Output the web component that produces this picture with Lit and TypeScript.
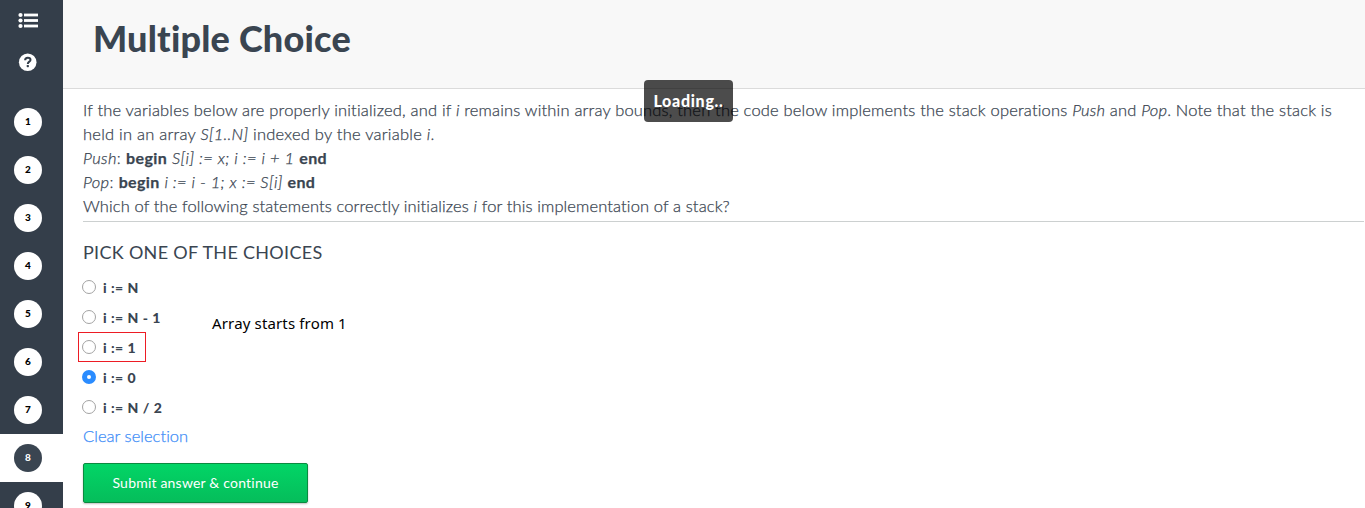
import { LitElement, html, css } from "lit";
import { customElement, state } from "lit/decorators.js";
import { classMap } from "lit/directives/class-map.js";

@customElement("question-sidebar")
class QuestionSidebar extends LitElement {
  static styles = css`
    :host { display: flex; flex-direction: column; width: 63px; flex: none; height: 508px; overflow: hidden; background: #343e4a; }
    .tools { height: 98px; flex: none; display: flex; flex-direction: column; padding: 12px 0 0 18px; box-sizing: border-box; gap: 24px; }
    svg { display: block; }
    .row { height: 48px; flex: none; display: flex; align-items: center; padding-left: 14px; }
    .row.active { background: #fff; }
    .dot { width: 28px; height: 28px; border-radius: 50%; background: #fff; color: #000; font: 900 10px/27px Lato, sans-serif; text-align: center; }
    .active .dot { background: #3a4551; color: #fff; }
  `;
  render() {
    return html`
      <div class="tools">
        <svg width="20" height="17" viewBox="0 0 20 17" fill="#fff">
          <circle cx="2.5" cy="3" r="2.1"/><circle cx="2.5" cy="8.5" r="2.1"/><circle cx="2.5" cy="14" r="2.1"/>
          <rect x="6" y="1.6" width="14" height="2.8"/><rect x="6" y="7.1" width="14" height="2.8"/><rect x="6" y="12.6" width="14" height="2.8"/>
        </svg>
        <svg width="20" height="18" viewBox="0 0 20 18">
          <circle cx="9.7" cy="9.2" r="8.8" fill="#fff"/>
          <path d="M7.1 7.2C7.1 5.5 8.3 4.7 9.8 4.7S12.5 5.5 12.5 6.9C12.5 8.7 9.8 8.6 9.8 10.9" fill="none" stroke="#343e4a" stroke-width="2"/>
          <rect x="8.7" y="12" width="2.2" height="2.2" rx=".6" fill="#343e4a"/>
        </svg>
      </div>
      ${[1, 2, 3, 4, 5, 6, 7, 8, 9].map((n) => html`
        <div class=${classMap({ row: true, active: n === 8 })}><div class="dot">${n}</div></div>`)}
    `;
  }
}

@customElement("app-root")
class AppRoot extends LitElement {
  static styles = css`
    :host { display: flex; position: relative; width: 1365px; height: 508px; overflow: hidden; background: #fff; color: #3a4551; font-family: Lato, sans-serif; font-variant-ligatures: none; }
    main { flex: 1; min-width: 0; }
    header { height: 73px; background: #f8f8f8; border-bottom: 1px solid #dbdbdb; padding: 15px 0 0 30px; }
    h1 { margin: 0; font: 900 36px/46px Lato, sans-serif; letter-spacing: 0.22px; font-variant-ligatures: none; }
    .content { padding: 9px 1px 0 20px; }
    .text { font-size: 16.5px; font-weight: 300; line-height: 24px; border-bottom: 1px solid #ccd0d0; padding-bottom: 3px; white-space: nowrap; -webkit-text-stroke: 0.25px currentColor; }
    .l1 { letter-spacing: 0.183px; }
    .l2 { letter-spacing: 0.24px; }
    .l3 { letter-spacing: 0.38px; }
    .l4 { letter-spacing: 0.36px; }
    .l5 { letter-spacing: 0.12px; }
    b { font-weight: 700; font-size: 16px; }
    h2 { margin: 18px 0 0; font: 400 18px/24px Lato, sans-serif; letter-spacing: 0.3px; }
    .choices { margin-top: 9px; }
    .choice { display: flex; align-items: center; height: 30px; font: 900 14px/30px Lato, sans-serif; letter-spacing: 0.5px; cursor: pointer; }
    .radio { box-sizing: border-box; width: 14px; height: 14px; margin: -2px 7px 0 -1px; border: 1px solid #a3a3a3; border-radius: 50%; background: #fff; }
    .on .radio { border: 5px solid #2a8cff; }
    .marked { margin: -1px 0 1px -5px; width: 68px; height: 30px; box-sizing: border-box; border: 1px solid #ed1c24; padding: 2px 0 0 4px; }
    .clear { display: block; margin-top: 1px; font-size: 16.5px; font-weight: 300; line-height: 24px; color: #3c8cf7; letter-spacing: 0.04px; -webkit-text-stroke: 0.25px currentColor; }
    button { display: block; margin-top: 15px; width: 225px; height: 40px; border: 1px solid #0b8a40; border-radius: 2px; background: linear-gradient(#02d566, #05bd5b); color: #fff; font: 400 14px/36px Lato, sans-serif; letter-spacing: 0.2px; box-shadow: 0 1px 2px rgba(0,0,0,.25); padding: 0 0 1px; }
    .note { position: absolute; left: 212px; top: 312px; font: 400 15px/22px "Noto Sans", sans-serif; letter-spacing: 0.15px; color: #000; }
    .toast { position: absolute; left: 644px; top: 80px; width: 89px; height: 42px; border-radius: 4px; background: rgba(0,0,0,.7); color: #fff; font: 900 16px/41px Lato, sans-serif; letter-spacing: 0.7px; text-align: center; }
  `;
  @state() selected = 3;
  render() {
    return html`
      <question-sidebar></question-sidebar>
      <main>
        <header><h1>Multiple Choice</h1></header>
        <div class="content">
          <div class="text">
            <div class="l1">If the variables below are properly initialized, and if <i>i</i> remains within array bounds, then the code below implements the stack operations <i>Push</i> and <i>Pop</i>. Note that the stack is</div>
            <div class="l2">held in an array <i>S[1..N]</i> indexed by the variable <i>i</i>.</div>
            <div class="l3"><i>Push</i>: <b>begin</b> <i>S[i] := x; i := i + 1</i> <b>end</b></div>
            <div class="l4"><i>Pop</i>: <b>begin</b> <i>i := i - 1; x := S[i]</i> <b>end</b></div>
            <div class="l5">Which of the following statements correctly initializes <i>i</i> for this implementation of a stack?</div>
          </div>
          <h2>PICK ONE OF THE CHOICES</h2>
          <div class="choices">
            ${["i := N", "i := N - 1", "i := 1", "i := 0", "i := N / 2"].map((t, n) => html`
              <div class=${classMap({ choice: true, on: n === this.selected, marked: n === 2 })} @click=${() => (this.selected = n)}><span class="radio"></span><span>${t}</span></div>`)}
          </div>
          <a class="clear">Clear selection</a>
          <button>Submit answer &amp; continue</button>
        </div>
      </main>
      <div class="note">Array starts from 1</div>
      <div class="toast">Loading..</div>
    `;
  }
}
